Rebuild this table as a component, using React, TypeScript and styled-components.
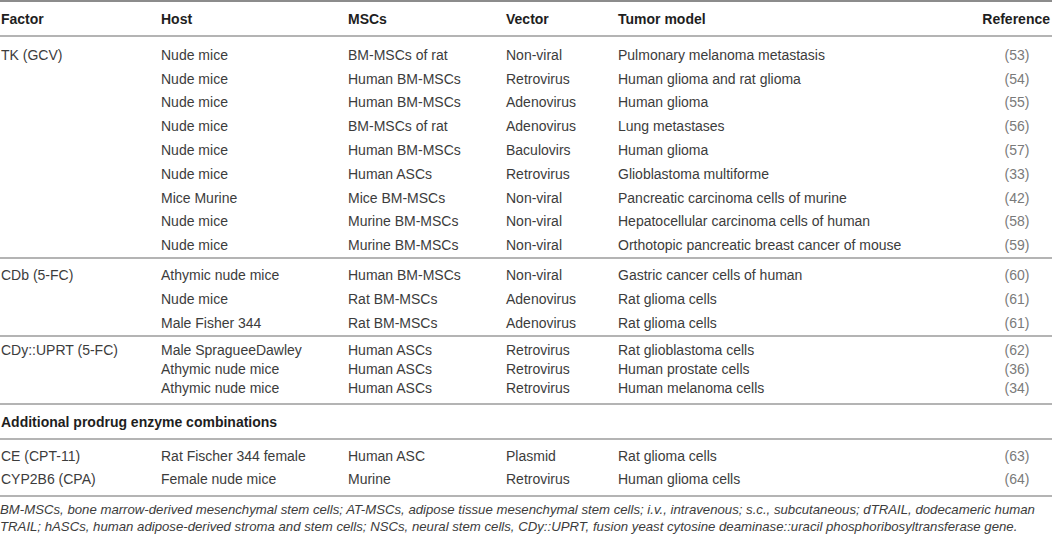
import React from "react";
import styled, { createGlobalStyle } from "styled-components";

const Global = createGlobalStyle`
  html, body { margin: 0; padding: 0; background: #fff; }
  body { font-family: "Liberation Sans", Arial, sans-serif; }
`;

const Page = styled.div`
  width: 1052px;
  height: 536px;
  overflow: hidden;
  background: #fff;
  border-top: 2px solid #8c8c8c;
  box-sizing: border-box;
  font-size: 14px;
  color: #3c3c3c;
`;

const Section = styled.div<{ $pt: number; $pb: number }>`
  padding: ${(p) => p.$pt}px 0 ${(p) => p.$pb}px;
  border-bottom: 2px solid #b4b4b4;
`;

const Row = styled.div<{ $h: number }>`
  display: grid;
  grid-template-columns: 160px 187px 158px 112px 364px 71px;
  height: ${(p) => p.$h}px;
  align-items: center;
`;

const HeadCell = styled.div<{ $right?: boolean }>`
  padding: 0 ${(p) => (p.$right ? "2px" : "0")} 0 1px;
  font-weight: bold;
  color: #1e1e1e;
  text-align: ${(p) => (p.$right ? "right" : "left")};
`;

const Cell = styled.div<{ $ref?: boolean }>`
  padding-left: 1px;
  white-space: nowrap;
  color: ${(p) => (p.$ref ? "#7a7a7a" : "#3c3c3c")};
  text-align: ${(p) => (p.$ref ? "center" : "left")};
`;

const SubHead = styled.div`
  height: 33px;
  display: flex;
  align-items: center;
  padding-left: 1px;
  font-weight: bold;
  color: #1e1e1e;
`;

const Foot = styled.div`
  padding-top: 4px;
  font-style: italic;
  font-size: 13.2px;
  line-height: 17px;
  color: #3c3c3c;
  white-space: nowrap;
`;

type R = [string, string, string, string, string, string];

const sections: { h: number; pt: number; pb: number; rows: R[] }[] = [
  {
    h: 23.8,
    pt: 6,
    pb: 0,
    rows: [
      ["TK (GCV)", "Nude mice", "BM-MSCs of rat", "Non-viral", "Pulmonary melanoma metastasis", "(53)"],
      ["", "Nude mice", "Human BM-MSCs", "Retrovirus", "Human glioma and rat glioma", "(54)"],
      ["", "Nude mice", "Human BM-MSCs", "Adenovirus", "Human glioma", "(55)"],
      ["", "Nude mice", "BM-MSCs of rat", "Adenovirus", "Lung metastases", "(56)"],
      ["", "Nude mice", "Human BM-MSCs", "Baculovirs", "Human glioma", "(57)"],
      ["", "Nude mice", "Human ASCs", "Retrovirus", "Glioblastoma multiforme", "(33)"],
      ["", "Mice Murine", "Mice BM-MSCs", "Non-viral", "Pancreatic carcinoma cells of murine", "(42)"],
      ["", "Nude mice", "Murine BM-MSCs", "Non-viral", "Hepatocellular carcinoma cells of human", "(58)"],
      ["", "Nude mice", "Murine BM-MSCs", "Non-viral", "Orthotopic pancreatic breast cancer of mouse", "(59)"],
    ],
  },
  {
    h: 24,
    pt: 4,
    pb: 0,
    rows: [
      ["CDb (5-FC)", "Athymic nude mice", "Human BM-MSCs", "Non-viral", "Gastric cancer cells of human", "(60)"],
      ["", "Nude mice", "Rat BM-MSCs", "Adenovirus", "Rat glioma cells", "(61)"],
      ["", "Male Fisher 344", "Rat BM-MSCs", "Adenovirus", "Rat glioma cells", "(61)"],
    ],
  },
  {
    h: 19,
    pt: 3,
    pb: 6,
    rows: [
      ["CDy::UPRT (5-FC)", "Male SpragueeDawley", "Human ASCs", "Retrovirus", "Rat glioblastoma cells", "(62)"],
      ["", "Athymic nude mice", "Human ASCs", "Retrovirus", "Human prostate cells", "(36)"],
      ["", "Athymic nude mice", "Human ASCs", "Retrovirus", "Human melanoma cells", "(34)"],
    ],
  },
];

const extra: R[] = [
  ["CE (CPT-11)", "Rat Fischer 344 female", "Human ASC", "Plasmid", "Rat glioma cells", "(63)"],
  ["CYP2B6 (CPA)", "Female nude mice", "Murine", "Retrovirus", "Human glioma cells", "(64)"],
];

const heads = ["Factor", "Host", "MSCs", "Vector", "Tumor model", "Reference"];

function DataRow({ r, h }: { r: R; h: number }) {
  return (
    <Row $h={h}>
      {r.map((c, i) => (
        <Cell key={i} $ref={i === 5}>
          {c}
        </Cell>
      ))}
    </Row>
  );
}

export default function App() {
  return (
    <Page>
      <Global />
      <Section $pt={0} $pb={0}>
        <Row $h={33}>
          {heads.map((t, i) => (
            <HeadCell key={t} $right={i === 5}>
              {t}
            </HeadCell>
          ))}
        </Row>
      </Section>
      {sections.map((s, si) => (
        <Section key={si} $pt={s.pt} $pb={s.pb}>
          {s.rows.map((r, ri) => (
            <DataRow key={ri} r={r} h={s.h} />
          ))}
        </Section>
      ))}
      <Section $pt={0} $pb={0}>
        <SubHead>Additional prodrug enzyme combinations</SubHead>
      </Section>
      <Section $pt={4} $pb={5}>
        {extra.map((r, ri) => (
          <DataRow key={ri} r={r} h={23} />
        ))}
      </Section>
      <Foot>
        BM-MSCs, bone marrow-derived mesenchymal stem cells; AT-MSCs, adipose tissue mesenchymal stem cells; i.v., intravenous; s.c., subcutaneous; dTRAIL, dodecameric human
        <br />
        TRAIL; hASCs, human adipose-derived stroma and stem cells; NSCs, neural stem cells, CDy::UPRT, fusion yeast cytosine deaminase::uracil phosphoribosyltransferase gene.
      </Foot>
    </Page>
  );
}
